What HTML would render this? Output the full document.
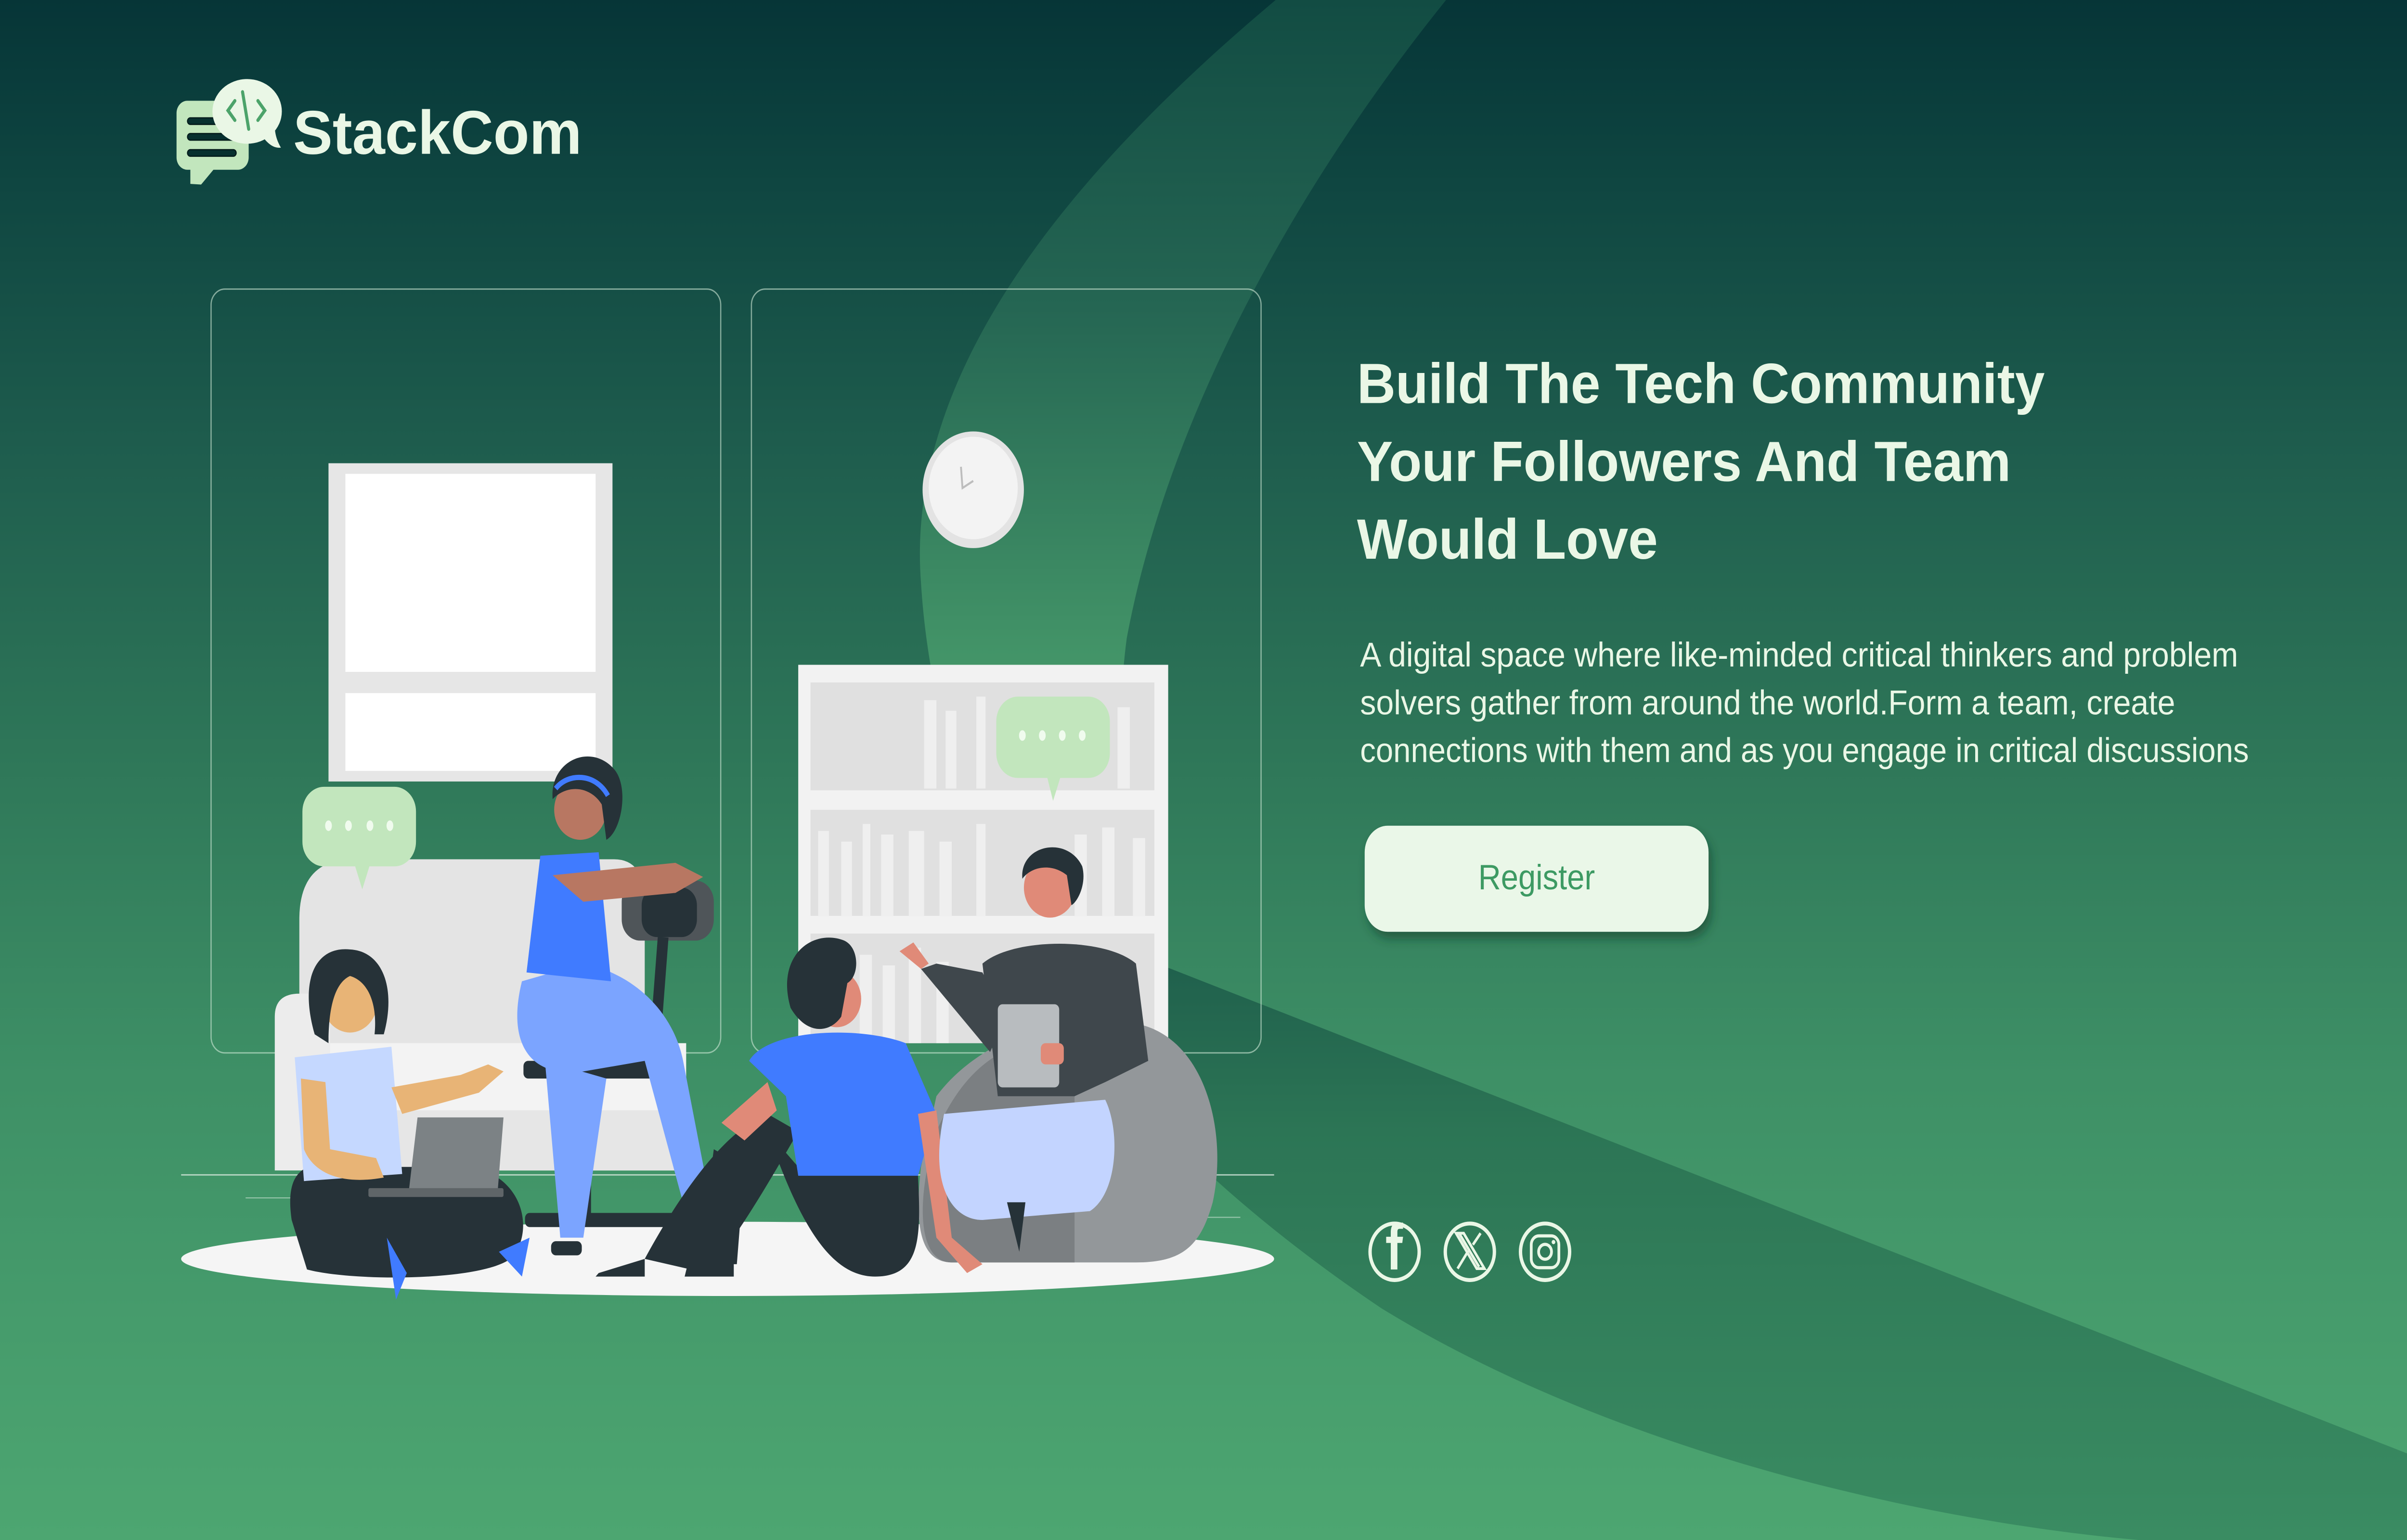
<!DOCTYPE html>
<html><head><meta charset="utf-8"><style>
html,body{margin:0;padding:0;background:#0a3a3a;width:100%;height:100%;overflow:hidden;}
svg{display:block;width:100vw;height:100vh;position:absolute;left:0;top:0}
</style></head><body>
<svg viewBox="0 0 1568 871" preserveAspectRatio="none" xmlns="http://www.w3.org/2000/svg">
<defs>
<linearGradient id="bg" x1="0" y1="0" x2="0" y2="871" gradientUnits="userSpaceOnUse">
<stop offset="0" stop-color="#063537"/><stop offset="0.12" stop-color="#0f4641"/><stop offset="0.3" stop-color="#1f5e4e"/><stop offset="0.5" stop-color="#2f7859"/><stop offset="0.7" stop-color="#3e9066"/><stop offset="1" stop-color="#4da671"/>
</linearGradient>
<linearGradient id="band" x1="0" y1="0" x2="0" y2="871" gradientUnits="userSpaceOnUse">
<stop offset="0" stop-color="#124c43"/><stop offset="0.2" stop-color="#256653"/><stop offset="0.45" stop-color="#46996a"/><stop offset="0.65" stop-color="#4aa16e"/><stop offset="1" stop-color="#4da671"/>
</linearGradient>
<linearGradient id="wedge" x1="0" y1="540" x2="0" y2="871" gradientUnits="userSpaceOnUse">
<stop offset="0" stop-color="#1f5f4c"/><stop offset="0.3" stop-color="#2c7555"/><stop offset="1" stop-color="#3a8c62"/>
</linearGradient>
<filter id="sh" x="-20%" y="-20%" width="140%" height="160%"><feDropShadow dx="2" dy="4" stdDeviation="3" flood-color="#0b3a2a" flood-opacity="0.55"/></filter>
</defs>
<rect width="1568" height="871" fill="url(#bg)"/>
<path d="M831,0 C680,110 590,220 600,330 C610,470 700,620 900,740 C1050,820 1250,860 1393,871 L1568,871 L1568,822 L760,547 C735,460 725,420 734,361 C760,240 840,110 942,0 Z" fill="url(#band)"/>
<path d="M760,547 L1568,822 L1568,871 L1393,871 C1250,860 1050,820 900,740 C780,670 710,600 668,540 Z" fill="url(#wedge)"/>

<rect x="115" y="57" width="47" height="39" rx="7" fill="#c2e6bd"/>
<path d="M124,95 L124,104 L131,104.4 L140,95 Z" fill="#c2e6bd"/>
<g stroke="#021a1a" stroke-width="4.4" stroke-linecap="round"><line x1="124" y1="68.5" x2="152" y2="68.5"/><line x1="124" y1="77.4" x2="152" y2="77.4"/><line x1="124" y1="86.5" x2="152" y2="86.5"/></g>
<g stroke="#07302f" stroke-width="3" stroke-linecap="round"><line x1="124" y1="68.5" x2="152" y2="68.5"/><line x1="124" y1="77.4" x2="152" y2="77.4"/><line x1="124" y1="86.5" x2="152" y2="86.5"/></g>
<ellipse cx="161" cy="63" rx="22.6" ry="18.3" fill="#eaf7e6"/>
<path d="M170,76 C174,81 178,84 183,83.5 C180,79 179,75 179,71 Z" fill="#eaf7e6"/>
<g stroke="#4ca36a" stroke-width="2" stroke-linecap="round" fill="none"><path d="M153,57 L148.5,62.5 L153,68"/><path d="M168,57 L172.5,62.5 L168,68"/><line x1="158" y1="52" x2="162" y2="73"/></g>
<text x="191" y="87" font-family="Liberation Sans, sans-serif" font-weight="bold" font-size="35" fill="#eaf7e6" textLength="188" lengthAdjust="spacingAndGlyphs">StackCom</text>

<rect x="137.5" y="163.5" width="332" height="432" rx="9" fill="none" stroke="#cfe8d6" stroke-opacity="0.6" stroke-width="0.8"/>
<rect x="489.5" y="163.5" width="332" height="432" rx="9" fill="none" stroke="#cfe8d6" stroke-opacity="0.6" stroke-width="0.8"/>
<rect x="214" y="262" width="185" height="180" fill="#e6e6e6"/>
<rect x="225" y="268" width="163" height="112" fill="#fff"/>
<rect x="225" y="392" width="163" height="44" fill="#fff"/>
<circle cx="634" cy="277" r="33" fill="#e3e3e3"/><circle cx="634" cy="276" r="29" fill="#f3f3f3"/>
<path d="M626,264 L627,276 L634,272" stroke="#bdbdbd" stroke-width="1.2" fill="none"/>
<rect x="520" y="376" width="241" height="214" fill="#f2f2f2"/>
<rect x="528" y="386" width="224" height="61" fill="#e0e0e0"/>
<rect x="528" y="458" width="224" height="60" fill="#e0e0e0"/>
<rect x="528" y="528" width="224" height="62" fill="#e0e0e0"/>
<g fill="#efefef"><rect x="602" y="396" width="8" height="50"/><rect x="616" y="402" width="7" height="44"/><rect x="636" y="394" width="6" height="52"/><rect x="728" y="400" width="8" height="46"/>
<rect x="533" y="470" width="7" height="48"/><rect x="548" y="476" width="7" height="42"/><rect x="562" y="466" width="5" height="52"/><rect x="574" y="472" width="8" height="46"/><rect x="592" y="470" width="10" height="48"/><rect x="612" y="476" width="8" height="42"/><rect x="636" y="466" width="6" height="52"/><rect x="700" y="472" width="8" height="46"/><rect x="718" y="468" width="8" height="50"/><rect x="738" y="474" width="8" height="44"/>
<rect x="560" y="540" width="8" height="50"/><rect x="575" y="546" width="8" height="44"/><rect x="592" y="536" width="8" height="54"/><rect x="610" y="544" width="8" height="46"/></g>
<line x1="118" y1="664.5" x2="830" y2="664.5" stroke="#e8f2ea" stroke-opacity="0.7" stroke-width="0.8"/>
<line x1="160" y1="677.5" x2="300" y2="677.5" stroke="#e8f2ea" stroke-opacity="0.5" stroke-width="0.6"/>
<line x1="740" y1="688.5" x2="808" y2="688.5" stroke="#e8f2ea" stroke-opacity="0.5" stroke-width="0.6"/>
<path d="M195,520 Q195,486 230,486 L400,486 Q420,486 420,510 L420,600 L195,600 Z" fill="#e4e4e4"/>
<path d="M179,575 Q179,562 195,562 L215,562 L215,662 L179,662 Z" fill="#ececec"/>
<rect x="215" y="590" width="232" height="72" fill="#f3f3f3"/>
<rect x="215" y="628" width="232" height="34" fill="#e6e6e6"/>
<ellipse cx="474" cy="712" rx="356" ry="21" fill="#f5f5f5"/>
<rect x="197" y="445" width="74" height="45" rx="14" fill="#c2e6bd"/><path d="M231,489 L236,503 L241,489 Z" fill="#c2e6bd"/>
<g fill="#f0fbee"><ellipse cx="214" cy="467" rx="2.2" ry="3"/><ellipse cx="227" cy="467" rx="2.2" ry="3"/><ellipse cx="241" cy="467" rx="2.2" ry="3"/><ellipse cx="254" cy="467" rx="2.2" ry="3"/></g>
<rect x="649" y="394" width="74" height="46" rx="14" fill="#c2e6bd"/><path d="M682,439 L686,453 L691,439 Z" fill="#c2e6bd"/>
<g fill="#f0fbee"><ellipse cx="666" cy="416" rx="2.2" ry="3"/><ellipse cx="679" cy="416" rx="2.2" ry="3"/><ellipse cx="692" cy="416" rx="2.2" ry="3"/><ellipse cx="705" cy="416" rx="2.2" ry="3"/></g>
<path d="M610,620 C640,585 700,570 745,580 C785,590 800,640 790,680 C782,705 770,714 740,714 L620,714 C598,714 596,690 600,660 Z" fill="#93979a"/>
<path d="M610,640 C630,600 660,585 700,588 L700,714 L620,714 C598,714 596,680 610,640 Z" fill="#7b7f82"/>
<rect x="405" y="498" width="60" height="34" rx="12" fill="#4f5559"/>
<rect x="418" y="502" width="36" height="28" rx="10" fill="#263238"/>
<path d="M432,530 L425,610" stroke="#263238" stroke-width="7"/>
<rect x="341" y="600" width="100" height="10" rx="3" fill="#263238"/>
<rect x="378" y="608" width="7" height="80" fill="#263238"/>
<rect x="342" y="686" width="110" height="8" rx="3" fill="#263238"/>
<circle cx="436" cy="705" r="7" fill="#4f5559"/>
<path d="M340,555 C330,590 345,610 380,606 L420,600 L448,690 L465,690 L445,600 C438,570 410,550 380,545 Z" fill="#7ba4ff"/>
<path d="M355,600 L365,700 L380,700 L395,610 Z" fill="#7ba4ff"/>
<path d="M352,484 L390,482 L398,555 L343,550 Z" fill="#407bff"/>
<path d="M360,495 L440,488 L458,496 L440,505 L380,510 Z" fill="#b87762"/>
<circle cx="378" cy="458" r="17" fill="#b87762"/>
<path d="M360,452 C358,430 385,420 400,435 C410,445 405,470 395,475 L392,455 C385,445 370,443 360,452 Z" fill="#263238"/>
<path d="M362,446 C370,437 388,437 396,450" stroke="#407bff" stroke-width="3" fill="none"/>
<rect x="359" y="702" width="20" height="8" rx="3" fill="#263238"/>
<rect x="444" y="688" width="18" height="8" rx="3" fill="#263238"/>
<path d="M190,690 C185,660 200,655 230,660 L300,660 C335,660 350,690 335,710 C320,725 230,725 200,718 Z" fill="#263238"/>
<path d="M192,598 L255,592 L262,664 L198,668 Z" fill="#c5d8ff"/>
<path d="M196,610 L198,650 C205,665 225,670 250,666 L245,655 L215,650 L212,612 Z" fill="#e8b476"/>
<path d="M255,615 L300,608 L318,602 L328,606 L312,618 L262,630 Z" fill="#e8b476"/>
<path d="M272,632 L328,632 L324,676 L266,676 Z" fill="#7c8285"/>
<rect x="240" y="672" width="88" height="5" rx="1" fill="#5f6568"/>
<circle cx="228" cy="566" r="18" fill="#e8b476"/>
<path d="M205,585 C195,555 205,535 228,537 C250,538 258,560 250,585 L244,585 C246,568 240,555 228,552 C218,556 214,570 214,590 Z" fill="#263238"/>
<path d="M252,700 L265,720 L258,735 Z" fill="#407bff"/>
<path d="M325,708 L345,700 L340,722 Z" fill="#407bff"/>
<path d="M420,712 C440,680 470,640 500,630 L520,640 C500,670 480,700 460,720 Z" fill="#263238"/>
<path d="M500,640 C520,690 540,722 570,722 C600,722 600,700 598,665 L520,660 Z" fill="#263238"/>
<path d="M465,650 L455,715 L480,715 L485,660 Z" fill="#263238"/>
<path d="M488,600 C500,582 560,580 590,590 L610,630 L598,665 L520,665 L512,620 Z" fill="#407bff"/>
<path d="M470,635 L500,612 L506,628 L485,645 Z" fill="#e08a78"/>
<path d="M598,630 L610,700 L630,720 L640,715 L620,700 L610,628 Z" fill="#e08a78"/>
<circle cx="545" cy="565" r="16" fill="#e08a78"/>
<path d="M515,570 C505,540 530,525 550,532 C560,536 560,552 552,556 L548,575 C540,585 525,585 515,570 Z" fill="#263238"/>
<path d="M390,720 L420,712 L420,722 L388,722 Z" fill="#263238"/>
<path d="M448,715 L478,712 L478,722 L446,722 Z" fill="#263238"/>
<path d="M615,630 L720,622 C730,640 728,675 710,685 L640,690 C620,690 605,670 615,630 Z" fill="#c3d4ff"/>
<path d="M640,545 C660,530 720,530 740,545 L748,600 L720,612 L700,620 L650,620 Z" fill="#3f474c"/>
<path d="M640,550 L610,545 L600,548 L645,595 L655,575 Z" fill="#3f474c"/>
<path d="M586,538 L600,548 L605,545 L595,533 Z" fill="#e08a78"/>
<rect x="650" y="568" width="40" height="47" rx="3" fill="#b8bcbf"/>
<rect x="678" y="590" width="15" height="12" rx="3" fill="#e08a78"/>
<circle cx="684" cy="502" r="17" fill="#e08a78"/>
<path d="M666,497 C664,478 695,472 705,490 C708,500 702,510 698,512 L695,495 C685,488 672,490 666,497 Z" fill="#263238"/>
<path d="M656,680 L668,680 L664,708 Z" fill="#263238"/>

<g font-family="Liberation Sans, sans-serif" font-weight="bold" font-size="32" fill="#eaf7e6">
<text x="884" y="228" textLength="448" lengthAdjust="spacingAndGlyphs">Build The Tech Community</text>
<text x="884" y="272" textLength="426" lengthAdjust="spacingAndGlyphs">Your Followers And Team</text>
<text x="884" y="316" textLength="196" lengthAdjust="spacingAndGlyphs">Would Love</text>
</g>
<g font-family="Liberation Sans, sans-serif" font-size="19.5" fill="#eaf7e6">
<text x="886" y="377" textLength="572" lengthAdjust="spacingAndGlyphs">A digital space where like-minded critical thinkers and problem</text>
<text x="886" y="404" textLength="531" lengthAdjust="spacingAndGlyphs">solvers gather from around the world.Form a team, create</text>
<text x="886" y="431" textLength="579" lengthAdjust="spacingAndGlyphs">connections with them and as you engage in critical discussions</text>
</g>
<rect x="889" y="467" width="224" height="60" rx="15" fill="#eaf7e8" filter="url(#sh)"/>
<text x="1001" y="503" text-anchor="middle" font-family="Liberation Sans, sans-serif" font-size="20" fill="#3d9a63" textLength="76" lengthAdjust="spacingAndGlyphs">Register</text>

<g fill="none" stroke="#eaf7e6" stroke-width="2.2">
<circle cx="908.5" cy="708" r="16"/><circle cx="957.5" cy="708" r="16"/><circle cx="1006.5" cy="708" r="16"/>
</g>
<path d="M906,718 L906,703 L903,703 L903,699.5 L906,699.5 L906,697 C906,693 908,691 911.5,691.5 L914,691.5 L914,695 L912,695 C910.5,695 910.3,695.6 910.3,697 L910.3,699.5 L914,699.5 L913.5,703 L910.3,703 L910.3,718 Z" fill="#eaf7e6"/>
<path d="M948.5,697.5 L953.5,697.5 L967,717.5 L962,717.5 Z M950.5,697.5 L963.5,716.5 M949.5,717.5 L956.5,707.5 M959.5,704 L964.5,697.5" stroke="#eaf7e6" stroke-width="1.6" fill="none"/>
<rect x="997.5" y="699" width="18" height="18" rx="5" fill="none" stroke="#eaf7e6" stroke-width="1.8"/>
<circle cx="1006.5" cy="708" r="4.2" fill="none" stroke="#eaf7e6" stroke-width="1.8"/>
<circle cx="1012" cy="702.5" r="1.2" fill="#eaf7e6"/>
</svg>
</body></html>
